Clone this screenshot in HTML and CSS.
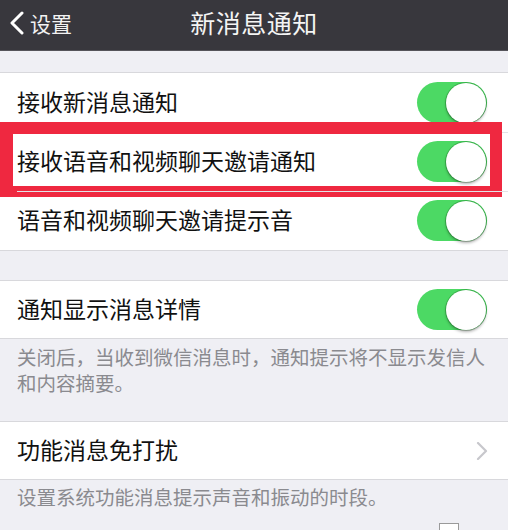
FILE: index.html
```html
<!DOCTYPE html>
<html lang="zh">
<head>
<meta charset="utf-8">
<link rel="stylesheet" href="styles.css">
</head>
<body>
<div class="screen">
  <header class="nav">
    <div class="back">
      <svg class="back-icon" width="16" height="24" viewBox="0 0 16 24"><polyline points="13,2 3,12 13,22" fill="none" stroke="#fff" stroke-width="3" stroke-linecap="round" stroke-linejoin="round"/></svg>
      <span class="back-text">设置</span>
    </div>
    <div class="title">新消息通知</div>
  </header>

  <div class="spacer s1"></div>
  <div class="group">
    <div class="row"><span class="label">接收新消息通知</span><span class="toggle"><span class="knob"></span></span></div>
    <div class="row highlighted"><span class="label">接收语音和视频聊天邀请通知</span><span class="toggle"><span class="knob"></span></span><span class="redbox"></span></div>
    <div class="row"><span class="label">语音和视频聊天邀请提示音</span><span class="toggle"><span class="knob"></span></span></div>
  </div>

  <div class="spacer s2"></div>
  <div class="group">
    <div class="row short"><span class="label">通知显示消息详情</span><span class="toggle"><span class="knob"></span></span></div>
  </div>
  <p class="note n1">关闭后，当收到微信消息时，通知提示将不显示发信人和内容摘要。</p>

  <div class="group">
    <div class="row short"><span class="label">功能消息免打扰</span>
      <svg class="chev" width="12" height="18" viewBox="0 0 12 18"><polyline points="2,1 10,9 2,17" fill="none" stroke="#c7c7cc" stroke-width="2.2" stroke-linecap="round" stroke-linejoin="round"/></svg>
    </div>
  </div>
  <p class="note n2">设置系统功能消息提示声音和振动的时段。</p>
  <span class="artifact"></span>
</div>
</body>
</html>
```

FILE: styles.css
```css
* { box-sizing: border-box; }
html, body { margin: 0; padding: 0; }
body {
  background: #efeff4;
  font-family: "Noto Sans CJK SC", "Noto Sans", sans-serif;
  width: 508px;
  height: 530px;
  overflow: hidden;
}
.screen { position: relative; width: 508px; height: 530px; }

.nav {
  height: 51px;
  background: #38373d;
  border-bottom: 1px solid #55545a;
  position: relative;
  display: flex;
  align-items: center;
  justify-content: center;
}
.back {
  position: absolute;
  left: 9px;
  top: 0;
  height: 50px;
  display: flex;
  align-items: center;
  gap: 5px;
  color: #f2f2f2;
}
.back-icon { margin-top: -4px; }
.back-text { font-size: 21px; margin-top: -4px; }
.title {
  color: #f4f4f4;
  font-size: 25px;
  margin-top: -6px;
  letter-spacing: 0.5px;
}

.spacer.s1 { height: 21px; }
.spacer.s2 { height: 29px; }

.group {
  background: #fff;
  border-top: 1px solid #d8d8dc;
  border-bottom: 1px solid #d8d8dc;
}
.row {
  position: relative;
  height: 59px;
  display: flex;
  align-items: center;
  justify-content: space-between;
  padding: 0 21px 0 17px;
}
.row + .row::before {
  content: "";
  position: absolute;
  left: 17px;
  right: 0;
  top: 0;
  height: 1px;
  background: #e2e2e6;
}
.row.short { height: 57px; }
.label {
  font-size: 23px;
  color: #111;
  margin-top: -3px;
}
.toggle {
  position: relative;
  width: 70px;
  height: 41px;
  border-radius: 21px;
  background: #4cd964;
}
.knob {
  position: absolute;
  right: 1px;
  top: 0.5px;
  width: 40px;
  height: 40px;
  border-radius: 50%;
  background: #fff;
  box-shadow: 0 2px 3px rgba(0,0,0,0.3), 0 0 0 1px rgba(0,70,0,0.25);
}
.redbox {
  position: absolute;
  left: 0;
  top: -10px;
  width: 502px;
  height: 75px;
  border: 12px solid #ef2840;
  border-left-width: 13px;
  border-bottom-width: 11px;
  pointer-events: none;
}
.chev { margin-right: -1px; }

.note {
  margin: 0;
  color: #8a8a8f;
  font-size: 19.5px;
  line-height: 26px;
  padding: 5px 20px 0 17px;
}
.note.n1 { height: 82px; }
.note.n2 { padding-top: 4px; }

.artifact {
  position: absolute;
  left: 439px;
  top: 523px;
  width: 20px;
  height: 10px;
  border: 1px solid #9a9a9a;
  background: #fff;
}
```
